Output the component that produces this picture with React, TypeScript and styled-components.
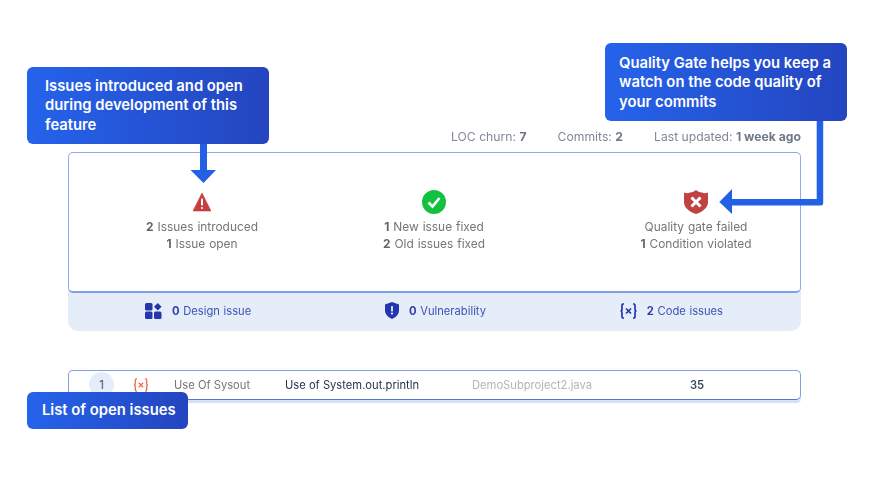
import styled, { createGlobalStyle } from "styled-components";

const GlobalStyle = createGlobalStyle`
  html, body {
    margin: 0;
    padding: 0;
    background: #ffffff;
  }
  body {
    font-family: Inter, "Liberation Sans", sans-serif;
  }
`;

const Page = styled.div`
  position: relative;
  width: 871px;
  height: 496px;
  overflow: hidden;
  box-sizing: border-box;
  padding: 128px 70px 0 68px;
  filter: blur(0.35px);
`;

const MetaRow = styled.div`
  display: flex;
  justify-content: flex-end;
  gap: 31px;
  height: 18px;
  line-height: 18px;
  margin-bottom: 5.5px;
  font-size: 12.2px;
  color: #7f8899;
  b {
    font-weight: 700;
    color: #6f7888;
  }
`;

const SummaryCard = styled.div`
  position: relative;
  z-index: 1;
  box-sizing: border-box;
  height: 141px;
  padding: 37.5px 0 0 53px;
  display: grid;
  grid-template-columns: 232px 262px 160px;
  align-items: start;
  background: #ffffff;
  border: 1px solid #8eabea;
  border-bottom: 2px solid #7f9fe6;
  border-radius: 5px;
`;

const Stat = styled.div`
  width: 160px;
  text-align: center;
  font-size: 11.9px;
  word-spacing: 0.6px;
  line-height: 16.5px;
  color: #757575;
  b {
    font-weight: 700;
    color: #666666;
  }
  svg {
    display: block;
    margin: 0 auto 5px;
  }
`;

const Band = styled.div`
  box-sizing: border-box;
  height: 40px;
  margin-top: -2px;
  padding: 0 78px 0 77px;
  display: flex;
  justify-content: space-between;
  align-items: center;
  background: #e5edf9;
  border-radius: 0 0 10px 10px;
`;

const BandItem = styled.div`
  display: flex;
  align-items: center;
  gap: 10px;
  font-size: 11.2px;
  word-spacing: 0.5px;
  color: #3f51b8;
  b {
    font-weight: 700;
    color: #2c3eb0;
  }
`;

const IssueRow = styled.div`
  position: relative;
  box-sizing: border-box;
  height: 30px;
  margin-top: 39px;
  padding-left: 20px;
  display: grid;
  grid-template-columns: 44px 41px 111px 187px 218px 1fr;
  align-items: center;
  font-size: 11.2px;
  background: #ffffff;
  border: 1px solid #7f9fe6;
  border-top-width: 1.5px;
  border-bottom: 1.5px solid #4f75d8;
  border-radius: 5px;
  box-shadow: 0 3.5px 0 #d5e1f6;
`;

const IndexBadge = styled.span`
  width: 25px;
  height: 25px;
  border-radius: 50%;
  background: #e5edf9;
  color: #4a5568;
  display: flex;
  align-items: center;
  justify-content: center;
`;

const IssueCell = styled.span<{ $tone: "muted" | "dark" | "faint" | "count" }>`
  color: ${(p) =>
    ({ muted: "#757575", dark: "#263450", faint: "#b4b4b4", count: "#3a4660" })[
      p.$tone
    ]};
  font-weight: ${(p) => (p.$tone === "count" ? 600 : 400)};
`;

const Callout = styled.div<{
  $left: number;
  $top: number;
  $width: number;
  $height: number;
}>`
  position: absolute;
  z-index: 3;
  left: ${(p) => p.$left}px;
  top: ${(p) => p.$top}px;
  width: ${(p) => p.$width}px;
  height: ${(p) => p.$height}px;
  box-sizing: border-box;
  display: flex;
  align-items: center;
  padding-left: ${(p) => (p.$left > 100 ? 14.5 : p.$height < 50 ? 15 : 18)}px;
  padding-top: ${(p) => (p.$height < 50 ? 0 : 2)}px;
  background: linear-gradient(90deg, #2563eb 0%, #2445bf 100%);
  border-radius: 6px;
  color: #ffffff;
  font-size: 14.8px;
  font-weight: 600;
  line-height: 19.5px;
`;

const ArrowLayer = styled.svg`
  position: absolute;
  z-index: 2;
  left: 0;
  top: 0;
`;

export default function App() {
  return (
    <Page>
      <GlobalStyle />
      <MetaRow>
        <span>
          LOC churn: <b>7</b>
        </span>
        <span>
          Commits: <b>2</b>
        </span>
        <span>
          Last updated: <b>1 week ago</b>
        </span>
      </MetaRow>

      <SummaryCard>
        <Stat>
          <svg width="18" height="24" viewBox="0 0 18 24">
            <path d="M9 3 L18 21 H0 Z" fill="#c53f3f" stroke="#c53f3f" strokeLinejoin="round" strokeWidth="0.6" />
            <rect x="8" y="8.5" width="2" height="7" rx="0.8" fill="#fff" />
            <circle cx="9" cy="18" r="1.1" fill="#fff" />
          </svg>
          <b>2</b> Issues introduced
          <br />
          <b>1</b> Issue open
        </Stat>
        <Stat>
          <svg width="24" height="24" viewBox="0 0 24 24">
            <circle cx="12" cy="12" r="12" fill="#12c23f" />
            <path d="M6.5 12.5 L10.5 16.5 L17.5 8" fill="none" stroke="#fff" strokeWidth="2.6" />
          </svg>
          <b>1</b> New issue fixed
          <br />
          <b>2</b> Old issues fixed
        </Stat>
        <Stat>
          <svg width="24" height="24" viewBox="0 0 24 24">
            <path
              d="M0 2.5 C2 3.5 4 3.5 6 2.5 C8 2.5 10.5 1.5 12 0 C13.5 1.5 16 2.5 18 2.5 C20 3.5 22 3.5 24 2.5 V12 C24 18 18 22 12 24 C6 22 0 18 0 12 Z"
              fill="#c04242"
            />
            <path d="M7.5 7.5 L16.5 16.5 M16.5 7.5 L7.5 16.5" stroke="#fff" strokeWidth="3" />
          </svg>
          Quality gate failed
          <br />
          <b>1</b> Condition violated
        </Stat>
      </SummaryCard>

      <Band>
        <BandItem>
          <svg width="17" height="16" viewBox="0 0 17 16" fill="#2536ad">
            <rect x="0" y="0" width="7.5" height="7.5" rx="1.5" />
            <rect x="0" y="8.5" width="7.5" height="7.5" rx="1.5" />
            <rect x="9" y="8.5" width="7.5" height="7.5" rx="1.5" />
            <path d="M12.8 0 L16.6 3.8 L12.8 7.6 L9 3.8 Z" />
          </svg>
          <span>
            <b>0</b> Design issue
          </span>
        </BandItem>
        <BandItem>
          <svg width="14" height="17" viewBox="0 0 14 17">
            <path d="M7 0 L14 2.5 V8.5 C14 12.5 10.5 15.5 7 17 C3.5 15.5 0 12.5 0 8.5 V2.5 Z" fill="#2536ad" />
            <rect x="6.1" y="4" width="1.8" height="5.5" rx="0.6" fill="#e5edf9" />
            <circle cx="7" cy="11.6" r="1.1" fill="#e5edf9" />
          </svg>
          <span>
            <b>0</b> Vulnerability
          </span>
        </BandItem>
        <BandItem>
          <svg width="17" height="16" viewBox="0 0 17 16" fill="none" stroke="#2536ad" strokeWidth="1.7">
            <path d="M4 1 H3 C2 1 2 2 2 3 V6 C2 7 1.5 8 .5 8 C1.5 8 2 9 2 10 V13 C2 14 2 15 3 15 H4" />
            <path d="M13 1 H14 C15 1 15 2 15 3 V6 C15 7 15.5 8 16.5 8 C15.5 8 15 9 15 10 V13 C15 14 15 15 14 15 H13" />
            <path d="M6 5.5 L11 10.5 M11 5.5 L6 10.5" />
          </svg>
          <span>
            <b>2</b> Code issues
          </span>
        </BandItem>
      </Band>

      <IssueRow>
        <IndexBadge>1</IndexBadge>
        <svg width="16" height="14" viewBox="0 0 17 16" fill="none" stroke="#f0704f" strokeWidth="1.6">
          <path d="M4 1 H3 C2 1 2 2 2 3 V6 C2 7 1.5 8 .5 8 C1.5 8 2 9 2 10 V13 C2 14 2 15 3 15 H4" />
          <path d="M13 1 H14 C15 1 15 2 15 3 V6 C15 7 15.5 8 16.5 8 C15.5 8 15 9 15 10 V13 C15 14 15 15 14 15 H13" />
          <path d="M6 5.5 L11 10.5 M11 5.5 L6 10.5" />
        </svg>
        <IssueCell $tone="muted">Use Of Sysout</IssueCell>
        <IssueCell $tone="dark">Use of System.out.println</IssueCell>
        <IssueCell $tone="faint">DemoSubproject2.java</IssueCell>
        <IssueCell $tone="count">35</IssueCell>
      </IssueRow>

      <ArrowLayer width="871" height="496" viewBox="0 0 871 496">
        <path d="M200 143 H207 V170 H216 L203.5 183 L190.5 170 H200 Z" fill="#2360e6" />
        <path
          d="M816.7 120 H823.2 V203 Q823.2 205.5 820.7 205.5 H732 V214 L719.3 202 L732 189 V199 H816.7 Z"
          fill="#2360e6"
        />
      </ArrowLayer>

      <Callout $left={27} $top={66.5} $width={242} $height={77}>
        <span>
          Issues introduced and open
          <br />
          during development of this
          <br />
          feature
        </span>
      </Callout>
      <Callout $left={604.5} $top={43} $width={242.5} $height={77.5}>
        <span>
          Quality Gate helps you keep a
          <br />
          watch on the code quality of
          <br />
          your commits
        </span>
      </Callout>
      <Callout $left={27} $top={392} $width={161} $height={37}>
        List of open issues
      </Callout>
    </Page>
  );
}
